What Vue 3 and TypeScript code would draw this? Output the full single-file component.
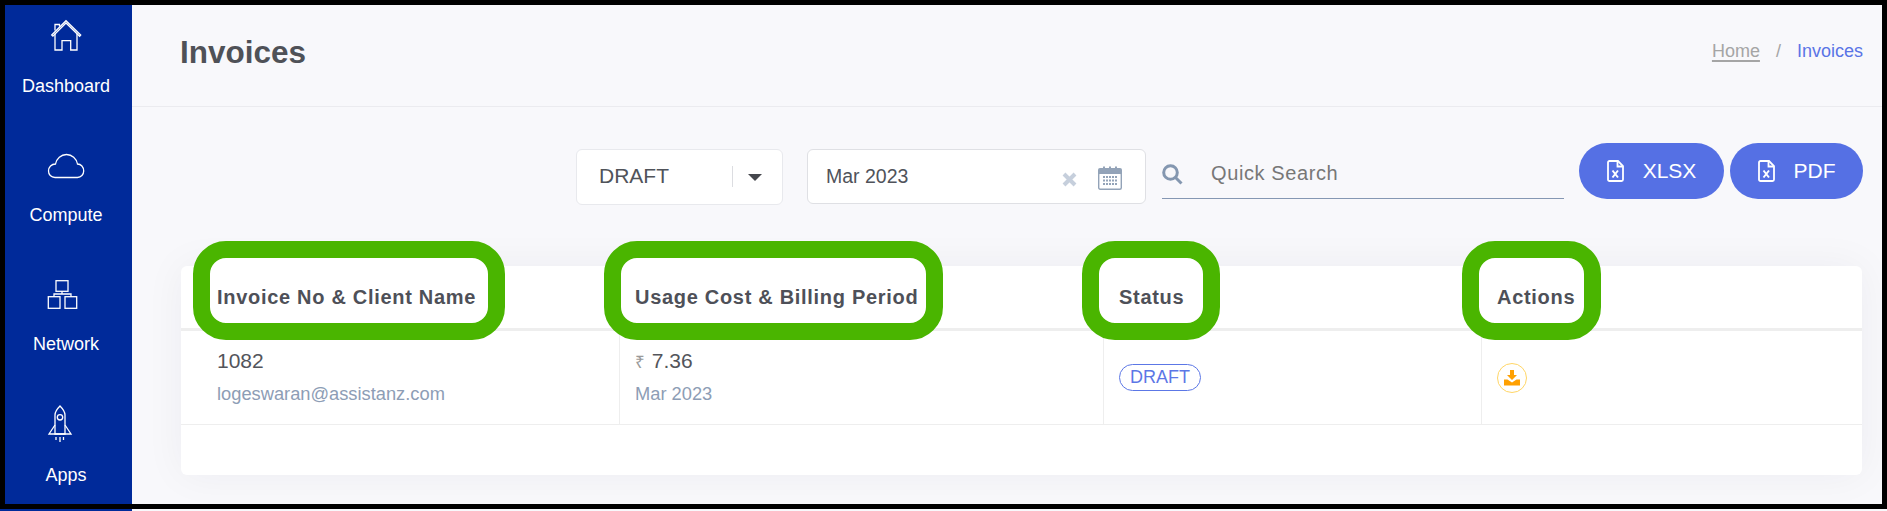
<script setup lang="ts">
const columns = [
  { key: 'invoice', label: 'Invoice No & Client Name' },
  { key: 'usage', label: 'Usage Cost & Billing Period' },
  { key: 'status', label: 'Status' },
  { key: 'actions', label: 'Actions' }
];

const exportButtons = ['XLSX', 'PDF'];
</script>

<template>
  <div class="page">
    <div class="shot">
      <aside class="sidebar">
        <div class="nav-item">
          <svg class="nav-icon" viewBox="0 0 40 40">
            <path d="M5.7 20 20 5.7 34.7 20 33.6 21.2 20 8 6.9 21.2Z" />
            <path d="M9 18.5V35H16V25.7H24.7V35H31V18.5M9 15.5V9.5H13.5V11.5" />
          </svg>
          <span class="nav-label">Dashboard</span>
        </div>
        <div class="nav-item">
          <svg class="nav-icon" viewBox="0 0 40 40">
            <path d="M9 33.5C5 33.5 2.5 30.5 2.5 27 2.5 23 5.5 20 9.5 20 10.5 14.5 15 10.5 20.5 10.5 26 10.5 30.5 14.5 31.5 20 35 20 37.7 23 37.7 27 37.7 30.5 35 33.5 31.5 33.5Z" />
          </svg>
          <span class="nav-label">Compute</span>
        </div>
        <div class="nav-item">
          <svg class="nav-icon" viewBox="0 0 40 40">
            <rect x="10" y="7.7" width="12" height="10.6" />
            <rect x="2.3" y="23.7" width="11.7" height="11.6" />
            <rect x="19" y="23.7" width="11.7" height="11.6" />
            <path d="M16 18.3V21M8 23.7V21H25V23.7" />
          </svg>
          <span class="nav-label">Network</span>
        </div>
        <div class="nav-item nav-item-last">
          <svg class="nav-icon" viewBox="0 0 40 40">
            <path d="M9 31V12C9 8 12 5 14 3 16 5 19 8 19 12V31Z" />
            <path d="M9 22 3 31H25L19 22" />
            <circle cx="14" cy="14.3" r="2.7" />
            <path d="M10 34V37M14 34V39M17.5 34V37" />
          </svg>
          <span class="nav-label">Apps</span>
        </div>
      </aside>

      <main class="main">
        <header class="page-head">
          <h1 class="page-title">Invoices</h1>
          <nav class="crumbs">
            <a class="crumb-home">Home</a>
            <span class="crumb-sep">/</span>
            <span class="crumb-current">Invoices</span>
          </nav>
        </header>

        <div class="toolbar">
          <div class="select-box">
            <span class="select-value">DRAFT</span>
            <span class="select-divider"></span>
            <span class="select-caret"></span>
          </div>
          <div class="date-box">
            <span class="date-value">Mar 2023</span>
            <svg class="date-clear" viewBox="0 0 15 15">
              <path d="M2 2 13 13M13 2 2 13" />
            </svg>
            <svg class="date-cal" viewBox="0 0 24 26">
              <path class="cal-head" d="M2 4H22A2 2 0 0 1 24 6V10H0V6A2 2 0 0 1 2 4Z" />
              <path class="cal-rings" d="M6 5V2.5M12 5V2.5M18 5V2.5" />
              <rect class="cal-body" x="0.7" y="9" width="22.6" height="16.3" rx="1.5" />
              <path class="cal-dots" d="M5 13H20M5 16.5H20M5 20H20" />
            </svg>
          </div>
          <div class="search-box">
            <svg class="search-icon" viewBox="0 0 21 21">
              <circle cx="8.5" cy="8.5" r="6.8" />
              <path d="M13.5 13.5 19.5 19.5" />
            </svg>
            <span class="search-text">Quick Search</span>
          </div>
          <div class="export-group">
            <button v-for="name in exportButtons" :key="name" class="export-btn" type="button">
              <svg class="file-icon" viewBox="0 0 17 22">
                <path d="M1 2.5A1.5 1.5 0 0 1 2.5 1H11L16 6V19.5A1.5 1.5 0 0 1 14.5 21H2.5A1.5 1.5 0 0 1 1 19.5Z" />
                <path d="M10.5 1.5V6.5H15.5" />
                <path class="file-x" d="M5.5 10.5 11 17.5M11 10.5 5.5 17.5" />
              </svg>
              <span>{{ name }}</span>
            </button>
          </div>
        </div>

        <section class="card">
          <div class="table-row table-head">
            <div v-for="col in columns" :key="col.key" class="head-cell" :class="`cell-${col.key}`">
              <span class="ring" :class="`ring-${col.key}`"></span>
              <span class="head-label">{{ col.label }}</span>
            </div>
          </div>
          <div class="table-row table-body">
            <div class="body-cell cell-invoice">
              <div class="cell-main">1082</div>
              <div class="cell-sub">logeswaran@assistanz.com</div>
            </div>
            <div class="body-cell cell-usage">
              <div class="cell-main"><span class="currency">₹</span> 7.36</div>
              <div class="cell-sub">Mar 2023</div>
            </div>
            <div class="body-cell cell-status">
              <span class="status-badge">DRAFT</span>
            </div>
            <div class="body-cell cell-actions">
              <button class="download-btn" type="button">
                <svg viewBox="0 0 16 16">
                  <path class="dl-arrow" d="M6 0H10V5H13L8 10 3 5H6Z" />
                  <path class="dl-tray" d="M0 9.5H3.5L8 12.5 12.5 9.5H16V15.5H0Z" />
                </svg>
              </button>
            </div>
          </div>
        </section>
      </main>
    </div>
    <div class="tail">
      <span class="tail-blue"></span>
    </div>
  </div>
</template>

<style>
html,
body {
  margin: 0;
  background: #f8f8fb;
}
</style>

<style scoped>
.page {
  display: flex;
  flex-direction: column;
  width: 1887px;
  height: 511px;
  overflow: hidden;
  font-family: 'Liberation Sans', Arial, sans-serif;
}

.shot {
  display: flex;
  box-sizing: border-box;
  height: 509px;
  border: 5px solid #000;
  overflow: hidden;
}

.tail {
  flex: 1;
  background: #f8f8fb;
}

.tail-blue {
  display: block;
  width: 132px;
  height: 100%;
  background: #002a9a;
}

.sidebar {
  flex: 0 0 127px;
  padding: 10px 5px 0 0;
  box-sizing: border-box;
  background: #002a9a;
}

.nav-item {
  display: flex;
  flex-direction: column;
  align-items: center;
  height: 129px;
}

.nav-item-last {
  margin-top: 1px;
}

.nav-item-last .nav-label {
  margin-top: 22px;
}

.nav-icon {
  width: 40px;
  height: 40px;
  flex-shrink: 0;
  fill: none;
  stroke: #fff;
  stroke-width: 1.3;
}

.nav-label {
  margin-top: 21px;
  font-size: 18px;
  line-height: 20px;
  color: #fff;
}

.main {
  flex: 1;
  min-width: 0;
  background: #f8f8fb;
}

.page-head {
  display: flex;
  align-items: center;
  justify-content: space-between;
  box-sizing: border-box;
  height: 102px;
  padding: 0 19px 7px 48px;
  border-bottom: 1px solid #ebebef;
}

.page-title {
  margin: 0;
  font-size: 31.5px;
  font-weight: 700;
  color: #4f5157;
}

.crumbs {
  display: flex;
  align-items: center;
  margin-top: -1px;
  font-size: 18px;
}

.crumb-home {
  color: #a5a5a5;
  text-decoration: underline;
  text-decoration-thickness: 2px;
  text-underline-offset: 3px;
}

.crumb-sep {
  margin: 0 16px;
  color: #a5a5a5;
}

.crumb-current {
  color: #5a74e6;
}

.toolbar {
  display: flex;
  align-items: flex-start;
  justify-content: flex-end;
  padding: 36px 19px 0 0;
}

.select-box {
  display: flex;
  align-items: center;
  box-sizing: border-box;
  width: 207px;
  height: 56px;
  margin-top: 6px;
  padding-left: 22px;
  background: #fff;
  border: 1px solid #e8e9ed;
  border-radius: 6px;
}

.select-value {
  width: 133px;
  margin-top: -2px;
  font-size: 21px;
  color: #50535a;
}

.select-divider {
  width: 1px;
  height: 21px;
  margin-top: -1px;
  background: #dcdde1;
}

.select-caret {
  margin-left: 15px;
  border-style: solid;
  border-width: 7px 7.5px 0;
  border-color: #45474d transparent transparent;
}

.date-box {
  display: flex;
  align-items: center;
  box-sizing: border-box;
  width: 339px;
  height: 55px;
  margin: 6px 0 0 24px;
  padding-left: 18px;
  background: #fff;
  border: 1px solid #dfe0e4;
  border-radius: 6px;
}

.date-value {
  width: 236px;
  margin-top: -1px;
  font-size: 19.5px;
  color: #50535a;
}

.date-clear {
  width: 15px;
  height: 15px;
  margin-top: 6px;
  fill: none;
  stroke: #c6cfdc;
  stroke-width: 4;
}

.date-cal {
  width: 24px;
  height: 26px;
  margin-left: 21px;
  overflow: visible;
}

.cal-head {
  fill: #93a3b8;
}

.cal-rings {
  fill: none;
  stroke: #93a3b8;
  stroke-width: 2;
}

.cal-body {
  fill: none;
  stroke: #93a3b8;
  stroke-width: 1.4;
}

.cal-dots {
  fill: none;
  stroke: #93a3b8;
  stroke-width: 2;
  stroke-dasharray: 2 1;
}

.search-box {
  display: flex;
  align-items: center;
  box-sizing: border-box;
  width: 402px;
  height: 47px;
  margin: 9px 0 0 16px;
  border-bottom: 1px solid #8597b3;
}

.search-icon {
  width: 21px;
  height: 21px;
  margin-top: -2px;
  fill: none;
  stroke: #8497b0;
  stroke-width: 3;
}

.search-text {
  margin-top: -4px;
  margin-left: 28px;
  font-size: 20px;
  letter-spacing: 0.6px;
  color: #777;
}

.export-group {
  display: flex;
  gap: 6px;
  margin-left: 15px;
}

.export-btn {
  display: flex;
  align-items: center;
  justify-content: center;
  gap: 19px;
  width: 145px;
  height: 56px;
  padding: 0;
  font-family: inherit;
  font-size: 21px;
  color: #fff;
  background: #5570e4;
  border: 0;
  border-radius: 28px;
}

.export-btn + .export-btn {
  width: 133px;
}

.file-icon {
  width: 17px;
  height: 22px;
  fill: none;
  stroke: #fff;
  stroke-width: 1.8;
}

.file-x {
  stroke-width: 2;
}

.card {
  position: relative;
  box-sizing: border-box;
  width: 1681px;
  height: 209px;
  margin: 61px 0 0 49px;
  background: #fff;
  border-radius: 6px;
  box-shadow: 0 0 40px rgba(30, 30, 60, 0.05);
}

.table-row {
  display: grid;
  grid-template-columns: 438px 484px 378px 381px;
}

.table-head {
  position: relative;
  z-index: 1;
  height: 65px;
  border-bottom: 3px solid #eee;
  box-sizing: border-box;
}

.head-cell {
  position: relative;
  display: flex;
  align-items: center;
  padding-left: 16px;
}

.head-cell.cell-invoice,
.body-cell.cell-invoice {
  padding-left: 36px;
}

.head-label {
  position: relative;
  font-size: 20px;
  font-weight: 700;
  letter-spacing: 0.7px;
  white-space: nowrap;
  color: #4e5058;
}

.ring {
  position: absolute;
  top: -25px;
  box-sizing: border-box;
  height: 99px;
  background: #fff;
  border: 17px solid #4ab500;
  border-radius: 33px;
}

.ring-invoice {
  left: 12px;
  width: 312px;
}

.ring-usage {
  left: -15px;
  width: 339px;
}

.ring-status {
  left: -21px;
  width: 138px;
}

.ring-actions {
  left: -19px;
  width: 139px;
}

.table-body {
  height: 94px;
  box-sizing: border-box;
  border-bottom: 1px solid #eee;
}

.body-cell {
  box-sizing: border-box;
  padding: 17px 0 0 15px;
  border-left: 1px solid #eee;
}

.body-cell.cell-invoice {
  border-left: 0;
}

.cell-main {
  height: 26px;
  font-size: 21px;
  line-height: 26px;
  color: #53555b;
}

.cell-sub {
  margin-top: 8px;
  font-size: 18.3px;
  line-height: 24px;
  color: #8d9db5;
}

.currency {
  margin-right: 1px;
  font-size: 17px;
  line-height: 1;
  color: #9a9a9a;
}

.status-badge {
  display: inline-block;
  box-sizing: border-box;
  width: 82px;
  height: 27px;
  margin-top: 16px;
  font-size: 18px;
  line-height: 24px;
  text-align: center;
  color: #5c77e6;
  border: 1.5px solid #5c77e6;
  border-radius: 14px;
}

.download-btn {
  display: flex;
  align-items: center;
  justify-content: center;
  box-sizing: border-box;
  width: 30px;
  height: 30px;
  margin-top: 15px;
  padding: 0;
  background: #fff;
  border: 1.5px solid #ffd666;
  border-radius: 50%;
}

.download-btn svg {
  width: 16px;
  height: 16px;
}

.dl-arrow,
.dl-tray {
  fill: #ffa000;
}
</style>
